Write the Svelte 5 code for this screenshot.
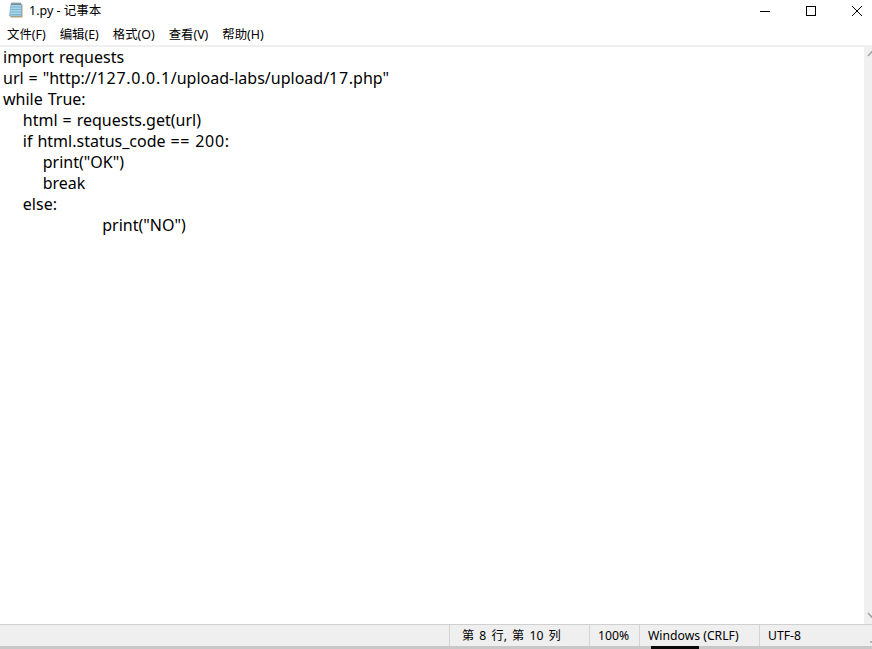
<script>
  const menus = ['文件(F)', '编辑(E)', '格式(O)', '查看(V)', '帮助(H)'];
  const lines = [
    'import requests',
    'url = "http://127.0.0.1/upload-labs/upload/17.php"',
    'while True:',
    '    html = requests.get(url)',
    '    if html.status_code == 200:',
    '        print("OK")',
    '        break',
    '    else:',
    '\t\tprint("NO")'
  ];
  const parts = (line) => line.split(/([\d.]*\d|==)/);
</script>

<div class="window">
  <header class="titlebar">
    <svg class="appicon" width="16" height="16" viewBox="0 0 16 16">
      <path d="M3.5 2.5h11v13h-12z" fill="#b79f73" />
      <path d="M3 2h10.5v12H1.5z" fill="#a9d3e6" stroke="#7fa6ba" stroke-width="0.7" />
      <path d="M3 5h10M2.8 7.5h10.4M2.5 10h10.8M2.2 12.5h11" stroke="#6fb0cf" stroke-width="0.8" />
      <path d="M4 3V0.5M6 3V0.5M8 3V0.5M10 3V0.5M12 3V0.5" stroke="#4a5a66" />
    </svg>
    <span class="title">1.py - 记事本</span>
    <div class="controls">
      <svg width="20" height="20" viewBox="0 0 20 20"><path d="M5 10.5h10" stroke="#000" /></svg>
      <svg width="20" height="20" viewBox="0 0 20 20"><rect x="5.5" y="5.5" width="9" height="9" fill="none" stroke="#000" /></svg>
      <svg width="20" height="20" viewBox="0 0 20 20"><path d="M5 5l10 10M15 5L5 15" stroke="#000" /></svg>
    </div>
  </header>
  <nav class="menubar">
    {#each menus as m}<span>{m}</span>{/each}
  </nav>
  <main class="body">
    <pre class="text">{#each lines as line, i}{#each parts(line) as p, j}{#if j % 2}<span class="num">{p}</span>{:else}{p}{/if}{/each}{#if i < lines.length - 1}{'\n'}{/if}{/each}</pre>
    <div class="scroll">
      <svg class="arrow" width="9" height="6" viewBox="0 0 9 6"><path d="M1 5l3.5-4L8 5" fill="none" stroke="#a6a6a6" stroke-width="1.6" /></svg>
      <svg class="arrow" width="9" height="6" viewBox="0 0 9 6"><path d="M1 1l3.5 4L8 1" fill="none" stroke="#a6a6a6" stroke-width="1.6" /></svg>
    </div>
  </main>
  <footer class="status">
    <span class="cell pos">第 8 行, 第 10 列</span>
    <span class="cell zoom">100%</span>
    <span class="cell eol">Windows (CRLF)</span>
    <span class="cell enc">UTF-8</span>
    <i class="grip"></i>
  </footer>
  <div class="edge"><i class="taskbit"></i></div>
</div>

<style>
  :global(body) { margin: 0; background: #fff; }
  .window {
    width: 872px; height: 649px; display: flex; flex-direction: column; overflow: hidden;
    font-family: "Noto Sans", "Noto Sans CJK SC", sans-serif; color: #000; position: relative;
  }
  .titlebar { height: 20px; padding-top: 1px; display: flex; align-items: center; flex: none; }
  .appicon { margin-left: 8px; margin-top: -2px; }
  .title { margin-left: 5px; font-size: 12.5px; line-height: 16px; }
  .controls { margin-left: auto; display: flex; gap: 26px; padding-right: 5px; }
  .controls svg { flex: none; }
  .menubar {
    height: 24px; flex: none; display: flex; align-items: center; gap: 14px; padding-left: 7px;
    font-size: 12.4px; border-bottom: 2px solid #f0f0f0; box-sizing: content-box;
  }
  .menubar span { line-height: 16px; padding-top: 4px; }
  .body { flex: 1; display: flex; min-height: 0; }
  .text {
    flex: 1; margin: 0; padding: 0 0 0 3px; font-family: "Noto Sans", sans-serif;
    font-size: 16px; line-height: 21px; tab-size: 10; color: #000; word-spacing: 0.8px;
  }
  .num { letter-spacing: 0.7px; }
  .scroll {
    width: 8px; background: #f0f0f0; display: flex; flex-direction: column;
    justify-content: space-between; align-items: flex-start; padding: 4px 0 6px; overflow: hidden;
  }
  .arrow { flex: none; margin-left: 3px; }
  .status {
    height: 21px; flex: none; background: #efefef; border-top: 1px solid #d0d0d0;
    display: flex; align-items: center; font-size: 12.2px; padding-left: 449px; position: relative;
  }
  .cell { border-left: 1px solid #d4d4d4; height: 21px; line-height: 21px; box-sizing: border-box; padding-left: 8px; }
  .pos { width: 140px; padding-left: 12px; word-spacing: 2px; }
  .zoom { width: 50px; }
  .eol { width: 120px; }
  .grip { position: absolute; right: 0; bottom: 3px; width: 2px; height: 2px; background: #b4b4b4; }
  .edge { height: 3px; background: #c8c8c8; flex: none; position: relative; }
  .taskbit { position: absolute; left: 651px; top: 0; width: 48px; height: 3px; background: #0a0a0a; }
</style>
